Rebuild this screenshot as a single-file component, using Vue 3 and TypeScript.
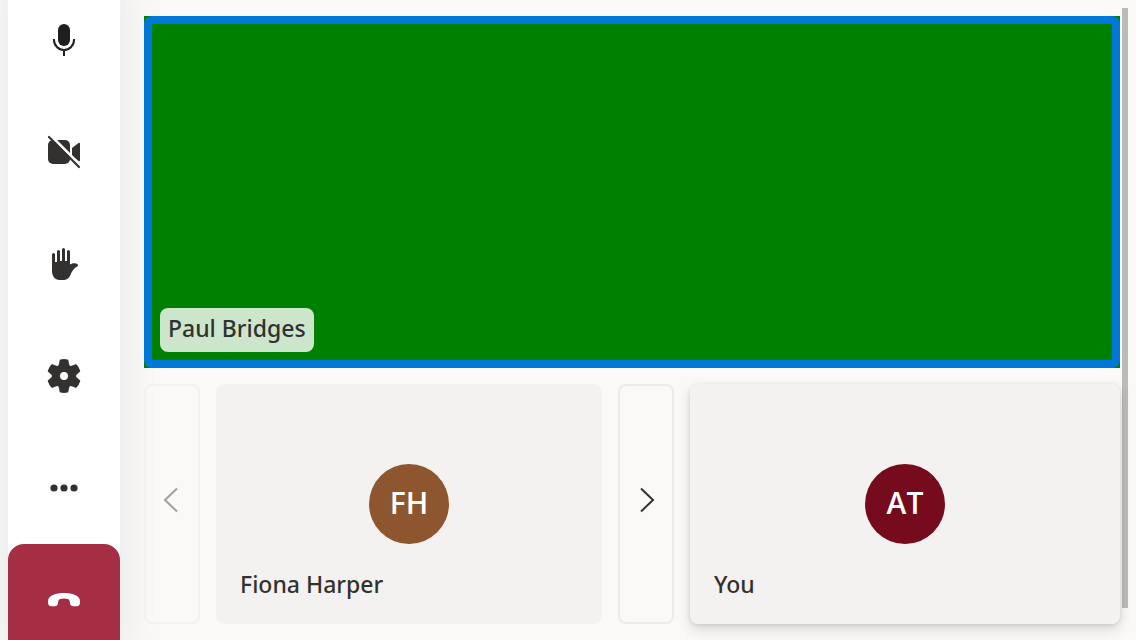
<script setup lang="ts">
import { ref } from 'vue'

interface Participant {
  name: string
  initials: string
}

const speaker = ref('Paul Bridges')
const remote = ref<Participant>({ name: 'Fiona Harper', initials: 'FH' })
const local = ref<Participant>({ name: 'You', initials: 'AT' })
</script>

<template>
  <div class="call">
    <div class="rail">
      <nav class="controls" aria-label="Call controls">
        <button class="control mic" type="button" aria-label="Mute">
          <svg viewBox="0 0 40 40">
            <rect x="14" y="4" width="12" height="22" rx="6" fill="currentColor" />
            <path d="M10 19v1a10 10 0 0 0 20 0v-1M20 30v6" fill="none" stroke="currentColor" stroke-width="2" />
          </svg>
        </button>
        <button class="control" type="button" aria-label="Turn on camera">
          <svg viewBox="0 0 40 40">
            <rect x="4" y="8" width="22" height="24" rx="5" fill="currentColor" />
            <path d="M28 16l6.500-5c.7-.5 1.500-.1 1.500.8v16.400c0 .9-.8 1.300-1.500.8L28 24z" fill="currentColor" />
            <path d="M7 4l31 31" fill="none" stroke="#fff" stroke-width="3" />
            <path d="M5 5l30 30" fill="none" stroke="currentColor" stroke-width="2.200" stroke-linecap="round" />
          </svg>
        </button>
        <button class="control" type="button" aria-label="Raise hand">
          <svg viewBox="0 0 40 40">
            <path
              d="M8 10.500a1.500 1.500 0 0 1 3 0V18h2V7.500a1.500 1.500 0 0 1 3 0V17h2V5.500a1.500 1.500 0 0 1 3 0V17h2V7.500a1.500 1.500 0 0 1 3 0V20.500c1.300-.9 2.900-1.300 4.600-1.300 2 0 3.400.9 3.400 2 0 .8-.8 1.300-1.700 1.800-2.100 1.200-3.600 3.400-4.800 5.600C26 32.500 24.300 36 20 36h-4.500C11 36 8 32 8 27z"
              fill="currentColor"
            />
          </svg>
        </button>
        <button class="control" type="button" aria-label="Settings">
          <svg viewBox="0 0 20 20">
            <path
              fill-rule="evenodd"
              fill="currentColor"
              d="M1.910 7.380A8.500 8.500 0 0 1 3.690 4.300a.5.5 0 0 1 .54-.13l1.920.68a1 1 0 0 0 1.320-.76l.36-2a.5.5 0 0 1 .4-.4 8.530 8.530 0 0 1 3.550 0c.2.04.35.2.38.4l.37 2a1 1 0 0 0 1.320.76l1.920-.68a.5.5 0 0 1 .54.13 8.500 8.500 0 0 1 1.780 3.080c.06.2 0 .4-.15.54l-1.560 1.320a1 1 0 0 0 0 1.520l1.560 1.320a.5.5 0 0 1 .15.54 8.500 8.500 0 0 1-1.780 3.080.5.5 0 0 1-.54.13l-1.920-.68a1 1 0 0 0-1.320.76l-.37 2a.5.5 0 0 1-.38.4 8.530 8.530 0 0 1-3.560 0 .5.5 0 0 1-.39-.4l-.36-2a1 1 0 0 0-1.320-.76l-1.920.68a.5.5 0 0 1-.54-.13 8.500 8.500 0 0 1-1.780-3.080.5.5 0 0 1 .15-.54l1.560-1.320a1 1 0 0 0 0-1.520L2.060 7.920a.5.5 0 0 1-.15-.54zM8 10a2 2 0 1 0 4 0 2 2 0 0 0-4 0z"
            />
          </svg>
        </button>
        <button class="control" type="button" aria-label="More options">
          <svg viewBox="0 0 40 40" fill="currentColor">
            <circle cx="10" cy="20" r="3.600" />
            <circle cx="20" cy="20" r="3.600" />
            <circle cx="30" cy="20" r="3.600" />
          </svg>
        </button>
        <button class="control leave" type="button" aria-label="Leave call">
          <svg viewBox="0 0 40 40">
            <path
              d="M4 21C4 15.500 12 13 20 13s16 2.500 16 8v1.500c0 2.600-1.300 3.800-3.200 3.800h-3.600c-1.900 0-2.800-1-3.100-2.800l-.5-2.700c-.3-1.400-2.400-2.300-5.600-2.300s-5.300.9-5.600 2.300l-.5 2.700c-.3 1.800-1.200 2.800-3.100 2.800H7.200C5.300 26.300 4 25.100 4 22.500z"
              fill="currentColor"
            />
          </svg>
        </button>
      </nav>
    </div>

    <main class="stage">
      <section class="speaker">
        <div class="video">
          <span class="name-tag">{{ speaker }}</span>
        </div>
      </section>

      <section class="gallery">
        <button class="pager" type="button" aria-label="Previous page" disabled>
          <svg viewBox="0 0 32 32"><path d="M21 4.500L9 16l12 11.500" /></svg>
        </button>
        <article class="tile">
          <div class="avatar brown">{{ remote.initials }}</div>
          <span class="name">{{ remote.name }}</span>
        </article>
        <button class="pager" type="button" aria-label="Next page">
          <svg viewBox="0 0 32 32"><path d="M11 4.500L23 16 11 27.500" /></svg>
        </button>
        <article class="tile local">
          <div class="avatar maroon">{{ local.initials }}</div>
          <span class="name">{{ local.name }}</span>
        </article>
      </section>
      <div class="scrollbar" aria-hidden="true"></div>
    </main>
  </div>
</template>

<style>
body {
  margin: 0;
}
</style>

<style scoped>
.call,
.call * {
  box-sizing: border-box;
}

.call {
  display: flex;
  height: 100vh;
  overflow: hidden;
  background: #faf9f8;
  color: #323130;
  font-family: 'Noto Sans', 'Open Sans', sans-serif;
  font-size: 23px;
  font-weight: 500;
}

button {
  margin: 0;
  padding: 0;
  border: 0;
  color: inherit;
  font: inherit;
}

.rail {
  flex: none;
  display: flex;
  flex-direction: column;
  justify-content: center;
  padding: 0 8px;
  background: #fbfbfb;
}

.controls {
  flex: none;
  display: flex;
  flex-direction: column;
  background: #fff;
  box-shadow: 0 0 40px rgba(0, 0, 0, 0.1);
}

.control {
  display: flex;
  align-items: center;
  justify-content: center;
  width: 112px;
  height: 112px;
  background: #fff;
}

.control svg {
  width: 40px;
  height: 40px;
}

.mic {
  color: #201f1e;
}

.leave {
  border-radius: 16px;
  background: #a42e43;
  color: #fff;
}

.stage {
  position: relative;
  flex: 1;
  min-width: 0;
  display: flex;
  flex-direction: column;
  gap: 16px;
  padding: 16px;
}

.speaker {
  flex: 1;
  display: flex;
  background: #008000;
}

.video {
  flex: 1;
  display: flex;
  align-items: flex-end;
  padding: 8px;
  border: 8px solid #0078d7;
  border-radius: 8px;
}

.name-tag {
  padding: 4px 8px 8px;
  border-radius: 8px;
  background: rgba(255, 255, 255, 0.8);
  line-height: 32px;
}

.gallery {
  display: grid;
  grid-template-columns: 56px minmax(0, 386fr) 56px minmax(0, 430fr);
  gap: 16px;
  height: 240px;
}

.pager {
  display: flex;
  align-items: center;
  justify-content: center;
  padding-bottom: 8px;
  border: 2px solid #edebe9;
  border-radius: 8px;
  background: transparent;
}

.pager:disabled {
  border-color: #f3f2f1;
  color: #a19f9d;
}

.pager svg {
  width: 32px;
  height: 32px;
  fill: none;
  stroke: currentColor;
  stroke-width: 2;
}

.tile {
  position: relative;
  display: flex;
  align-items: center;
  justify-content: center;
  border-radius: 8px;
  background: #f3f2f1;
}

.local {
  box-shadow: 0 6px 14px rgba(0, 0, 0, 0.13), 0 1px 4px rgba(0, 0, 0, 0.11);
  z-index: 1;
}

.avatar {
  width: 80px;
  height: 80px;
  border-radius: 50%;
  color: #fff;
  font-family: 'Open Sans', 'Noto Sans', sans-serif;
  font-size: 30px;
  font-weight: 600;
  line-height: 78px;
  text-align: center;
}

.brown {
  background: #8e562e;
}

.maroon {
  background: #750b1c;
}

.name {
  position: absolute;
  bottom: 24px;
  left: 24px;
  line-height: 32px;
}

.scrollbar {
  position: absolute;
  top: 8px;
  right: 8px;
  bottom: 32px;
  width: 6px;
  background: #bcbbba;
}
</style>
